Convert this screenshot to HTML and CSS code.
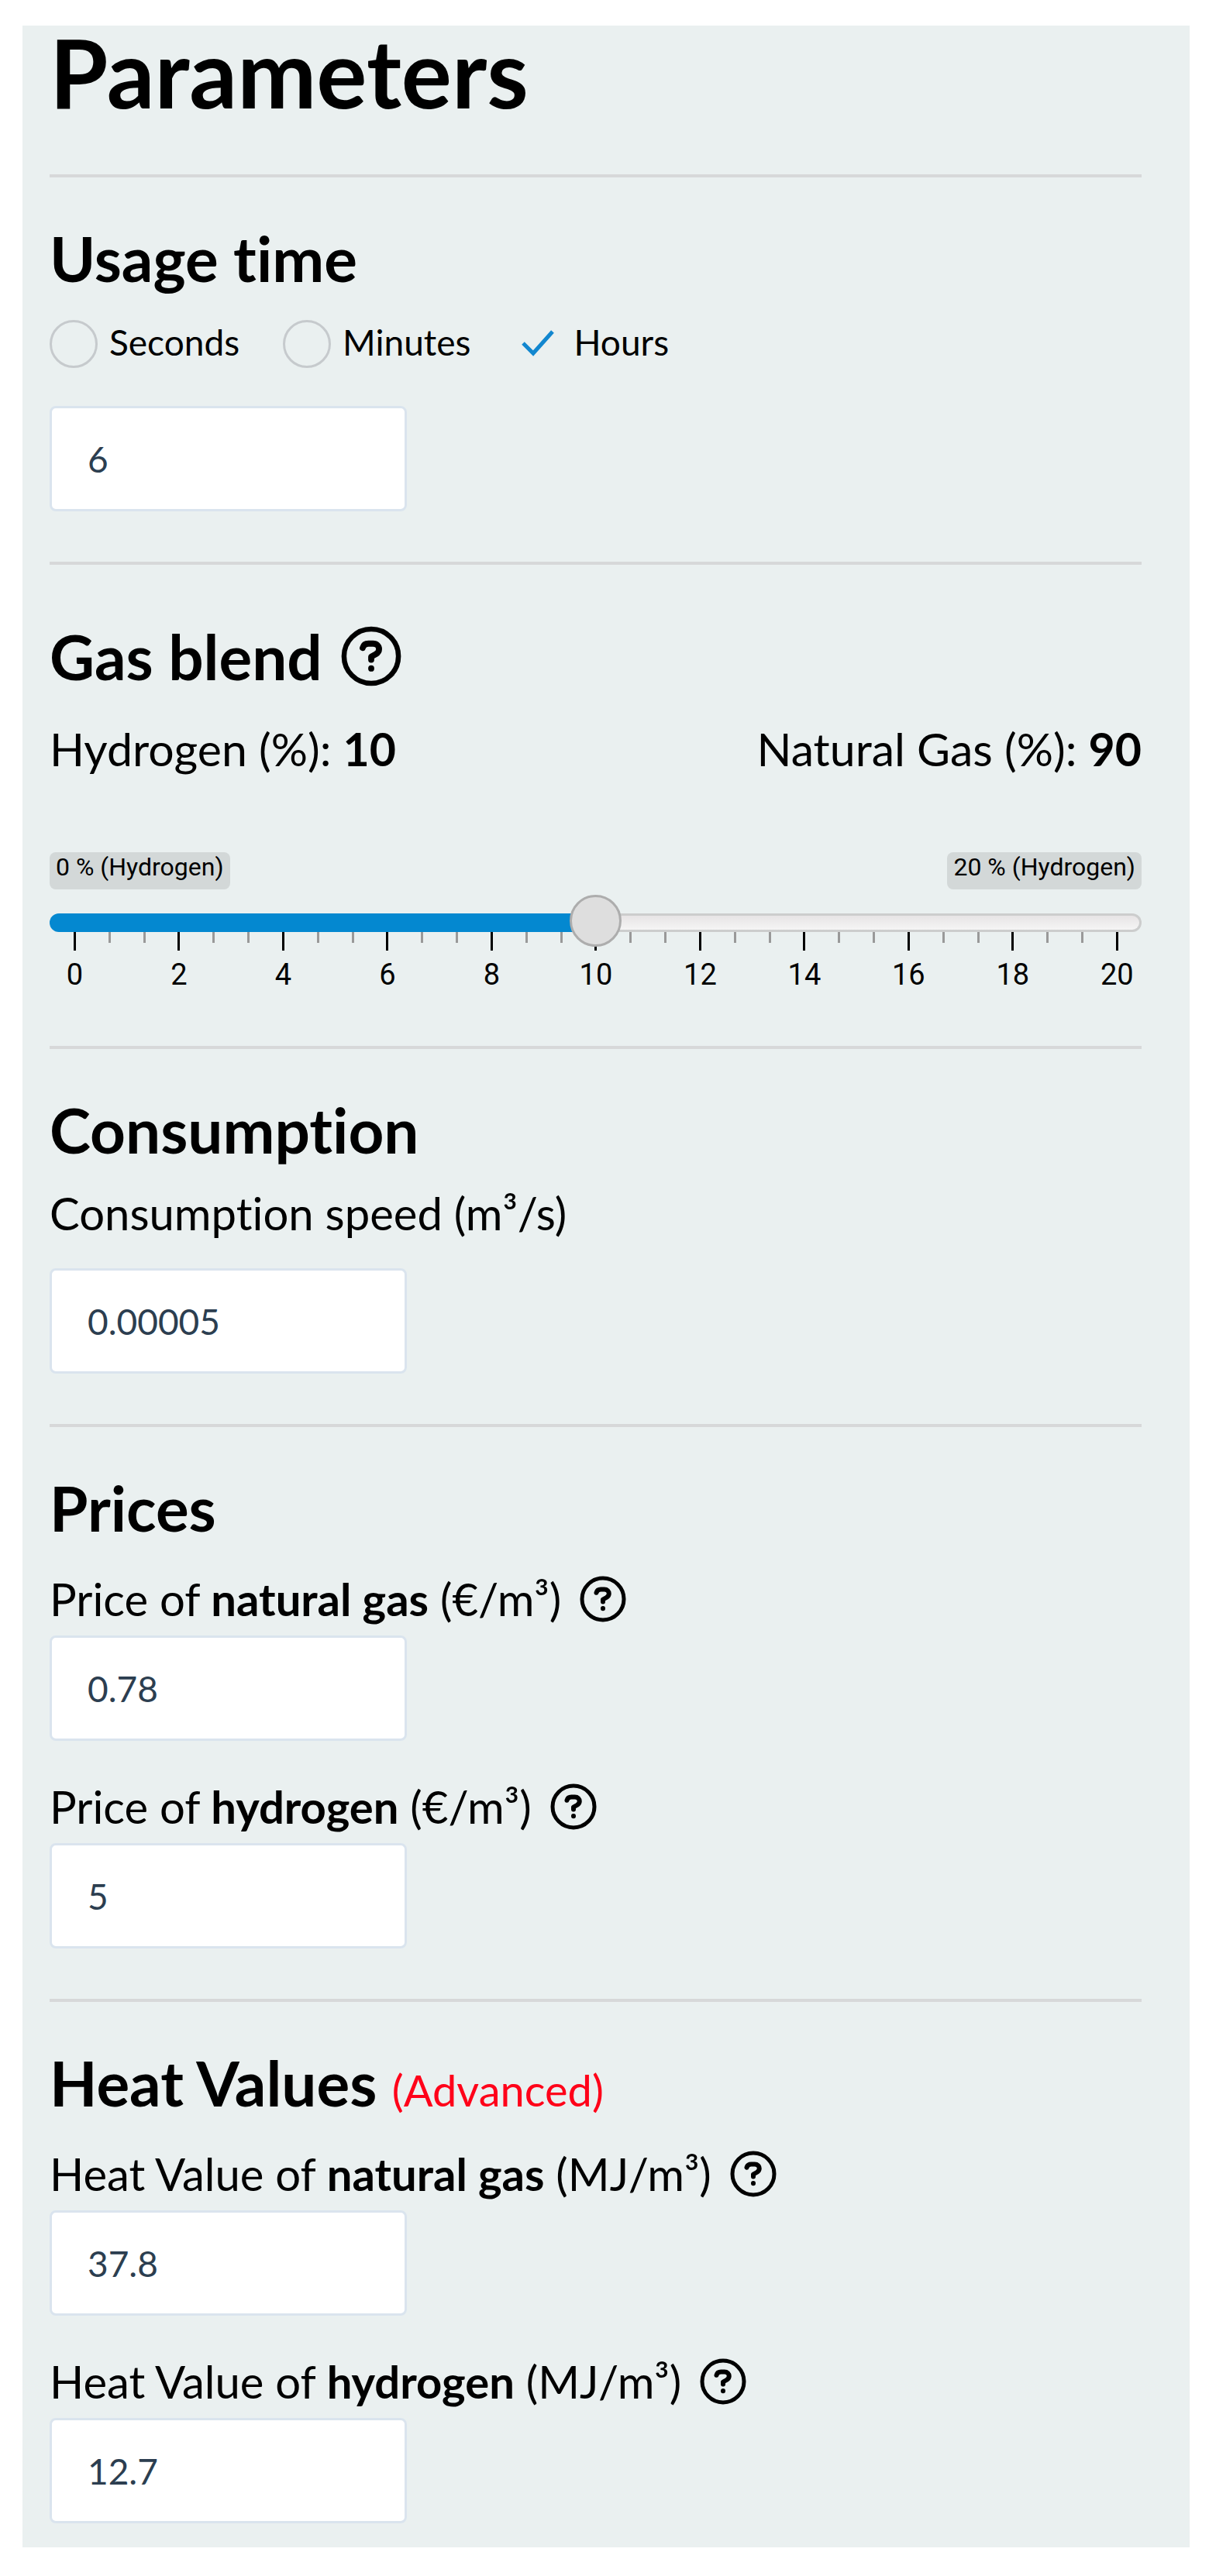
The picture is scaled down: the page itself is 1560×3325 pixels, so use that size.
FILE: index.html
```html
<!DOCTYPE html>
<html lang="en">
<head>
    <meta charset="UTF-8">
    <meta name="viewport" content="width=device-width, initial-scale=1.0">
    <title>Parameters</title>
    <link rel="stylesheet" href="styles.css">
</head>
<body>
    <svg class="sprite" width="0" height="0">
        <symbol id="help" viewBox="0 0 24 24">
            <circle cx="12" cy="12" r="10.8" />
            <path stroke-width="2.4" d="M8.6 8.7c.3-1.1 1.1-1.7 2.3-1.7h1.8c1.5 0 2.4 1 2.4 2.2 0 .9-.5 1.5-1.3 2l-1.8 1v1.2M12 16.8v.1" />
        </symbol>
    </svg>

    <form class="panel" name="parameters">
        <h1>Parameters</h1>
        <hr>

        <section>
            <h2>Usage time</h2>
            <div class="units">
                <label><input type="radio" name="unit" value="s">Seconds</label>
                <label><input type="radio" name="unit" value="m">Minutes</label>
                <label><input type="radio" name="unit" value="h" checked>Hours</label>
            </div>
            <input type="text" class="box" name="time" value="6" aria-label="Usage time">
        </section>
        <hr>

        <section>
            <h2 class="with-help">Gas blend
                <button type="button" class="help" aria-label="Help"><svg><use href="#help" /></svg></button>
            </h2>
            <div class="blend">
                <span>Hydrogen (%): <b>10</b></span>
                <span>Natural Gas (%): <b>90</b></span>
            </div>
            <div class="limits">
                <span>0 % (Hydrogen)</span>
                <span>20 % (Hydrogen)</span>
            </div>
            <input type="range" class="slider" name="hydrogen" min="0" max="20" value="10" aria-label="Hydrogen">
            <ul class="ticks">
                <li class="big">0</li><li></li><li></li>
                <li class="big">2</li><li></li><li></li>
                <li class="big">4</li><li></li><li></li>
                <li class="big">6</li><li></li><li></li>
                <li class="big">8</li><li></li><li></li>
                <li class="big">10</li><li></li><li></li>
                <li class="big">12</li><li></li><li></li>
                <li class="big">14</li><li></li><li></li>
                <li class="big">16</li><li></li><li></li>
                <li class="big">18</li><li></li><li></li>
                <li class="big">20</li>
            </ul>
        </section>
        <hr>

        <section>
            <h2>Consumption</h2>
            <div class="field wide">
                <label for="speed">Consumption speed (m³/s)</label>
                <input type="text" class="box" id="speed" value="0.00005">
            </div>
        </section>
        <hr>

        <section>
            <h2>Prices</h2>
            <div class="fields">
                <div class="field">
                    <div class="caption">
                        <label for="priceGas">Price of <b>natural gas</b> (€/m³)</label>
                        <button type="button" class="help" aria-label="Help"><svg><use href="#help" /></svg></button>
                    </div>
                    <input type="text" class="box" id="priceGas" value="0.78">
                </div>
                <div class="field">
                    <div class="caption">
                        <label for="priceHydrogen">Price of <b>hydrogen</b> (€/m³)</label>
                        <button type="button" class="help" aria-label="Help"><svg><use href="#help" /></svg></button>
                    </div>
                    <input type="text" class="box" id="priceHydrogen" value="5">
                </div>
            </div>
        </section>
        <hr>

        <section>
            <h2>Heat Values <span class="advanced">(Advanced)</span></h2>
            <div class="fields">
                <div class="field">
                    <div class="caption">
                        <label for="heatGas">Heat Value of <b>natural gas</b> (MJ/m³)</label>
                        <button type="button" class="help" aria-label="Help"><svg><use href="#help" /></svg></button>
                    </div>
                    <input type="text" class="box" id="heatGas" value="37.8">
                </div>
                <div class="field">
                    <div class="caption">
                        <label for="heatHydrogen">Heat Value of <b>hydrogen</b> (MJ/m³)</label>
                        <button type="button" class="help" aria-label="Help"><svg><use href="#help" /></svg></button>
                    </div>
                    <input type="text" class="box" id="heatHydrogen" value="12.7">
                </div>
            </div>
        </section>
    </form>
</body>
</html>
```
FILE: styles.css
```css
* {
    box-sizing: border-box;
}

body {
    margin: 0;
    padding: 33px 25px 37px 29px;
    background-color: white;
    color: black;
    font-family: Lato, sans-serif;
    font-size: 58px;
    line-height: 72px;
    font-variant-ligatures: none;
}

.sprite {
    position: absolute;
}

.panel {
    padding: 0 62px 31px 35px;
    background-color: #eaf0f0;
}

h1 {
    margin: 0 0 72px;
    font-size: 122px;
    line-height: 120px;
}

h2 {
    margin: 0;
    font-size: 80px;
    line-height: 96px;
}

hr {
    height: 4px;
    margin: 65px 0 56px;
    border: 0;
    background-color: #d7d8d9;
}

.units {
    display: flex;
    gap: 56px;
    margin: 32px 0 49px;
    font-size: 46px;
    line-height: 58px;
}

.units label {
    display: flex;
    gap: 15px;
    height: 62px;
}

.units input {
    appearance: none;
    width: 62px;
    height: 62px;
    margin: 0;
    border: 3px solid #c6cacd;
    border-radius: 50%;
}

.units input:checked {
    border-color: transparent;
    background: url("data:image/svg+xml,%3Csvg xmlns='http://www.w3.org/2000/svg' viewBox='0 0 56 56'%3E%3Cpath d='M9 27l13 13 25-28' fill='none' stroke='%231287cf' stroke-width='5'/%3E%3C/svg%3E") center no-repeat;
}

.box {
    display: block;
    width: 461px;
    height: 136px;
    padding: 0 46px;
    border: 3px solid #dae4ee;
    border-radius: 8px;
    background-color: white;
    color: #2c3e50;
    font-family: Lato, sans-serif;
    font-size: 46px;
}

.help {
    display: block;
    width: 60px;
    height: 60px;
    padding: 0;
    border: 0;
    background: none;
    cursor: pointer;
}

.help svg {
    display: block;
    width: 100%;
    height: 100%;
    fill: none;
    stroke: black;
    stroke-width: 2;
    stroke-linejoin: round;
    stroke-linecap: round;
}

.with-help {
    display: flex;
    align-items: center;
    gap: 24px;
    padding-top: 14px;
}

.with-help .help {
    width: 78px;
    height: 78px;
}

.blend,
.limits {
    display: flex;
    justify-content: space-between;
}

.blend {
    margin: 36px 0 97px;
    font-size: 59px;
}

.limits {
    margin-bottom: 31px;
    font-family: Roboto, sans-serif;
    font-size: 32px;
    line-height: 39px;
}

.limits span {
    height: 48px;
    padding: 0 8px;
    border-radius: 8px;
    background-color: #d3d8d8;
}

/* sits above the tick marks so the handle covers them */
.slider {
    appearance: none;
    display: block;
    position: relative;
    z-index: 1;
    width: 100%;
    height: 24px;
    margin: 0;
    background: none;
}

.slider::-webkit-slider-runnable-track {
    height: 24px;
    border: 3px solid transparent;
    border-radius: 12px;
    background:
        linear-gradient(to right, #0488d0 50%, transparent 50%) border-box,
        linear-gradient(#e7e4e5, #f5f5f5) padding-box,
        linear-gradient(#cccdcd, #cccdcd) border-box;
}

.slider::-webkit-slider-thumb {
    appearance: none;
    width: 67px;
    height: 67px;
    margin-top: -27px;
    border: 3px solid #adadad;
    border-radius: 50%;
    background-color: #dedede;
}

.ticks {
    display: flex;
    justify-content: space-between;
    height: 82px;
    margin: 0;
    padding: 0 30px 0 31px;
    list-style: none;
    font-family: Roboto, sans-serif;
    font-size: 38px;
    line-height: 44px;
}

.ticks li {
    display: flex;
    flex-direction: column;
    align-items: center;
    width: 3px;
}

.ticks li::before {
    content: "";
    width: 3px;
    height: 14px;
    flex-shrink: 0;
    background-color: #999;
}

.ticks .big::before {
    height: 24px;
    margin-bottom: 9px;
    background-color: black;
}

.wide {
    padding-top: 24px;
}

.wide label {
    display: block;
    margin-bottom: 35px;
}

.fields {
    display: flex;
    flex-direction: column;
    gap: 49px;
    margin-top: 34px;
}

.caption {
    display: flex;
    align-items: center;
    gap: 24px;
    margin-bottom: 11px;
}

.advanced {
    color: #ff0019;
    font-size: 56px;
    font-weight: 400;
    line-height: 56px;
}
```
